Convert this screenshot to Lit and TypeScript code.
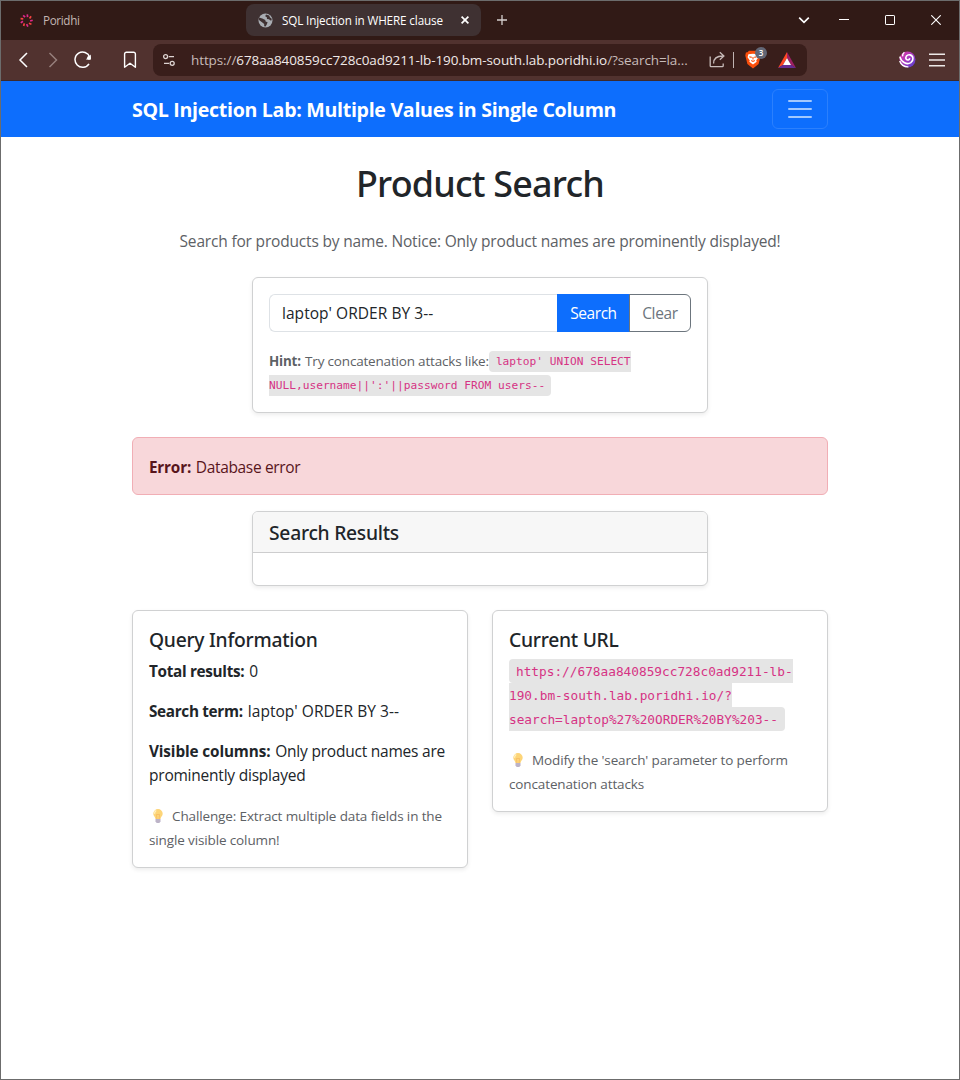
import { LitElement, html, css, svg } from "lit";
import { customElement, property } from "lit/decorators.js";

const reset = css`
  *, *::before, *::after { box-sizing: border-box; }
  :host { display: block; box-sizing: border-box; }
  svg { display: block; flex: none; }
`;

@customElement("browser-tabs")
export class BrowserTabs extends LitElement {
  static styles = [reset, css`
    .tabs { display: flex; align-items: center; height: 39px; padding: 0 18px 1px 18px; background: #311a16; font: 11.7px/16px "Open Sans", sans-serif; }
    .idle { display: flex; align-items: center; width: 227px; gap: 9px; color: #c3b6b3; letter-spacing: -0.36px; }
    .active { display: flex; align-items: center; width: 235px; height: 32px; padding: 0 9px 0 12px; border-radius: 8px; background: #3f3132; color: #fff; }
    .title { margin-left: 9px; width: 161px; letter-spacing: -0.13px; white-space: nowrap; }
    .close { margin-left: 15px; }
    .plus { margin-left: 15px; }
    .controls { display: flex; align-items: center; margin-left: auto; }
    .min { margin-left: 29px; }
    .max { margin-left: 35px; }
    .quit { margin-left: 35px; }
  `];
  render() {
    const spokes = Array.from({ length: 9 }, (_, i) => i * 40 + 10);
    return html`<div class="tabs">
      <div class="idle">
        <svg width="15" height="15" viewBox="-7.5 -7.5 15 15">
          ${spokes.map((a, i) => svg`<path d="M-.3 -6.2L.5 -3.6" transform="rotate(${a})" stroke=${i % 2 ? "#f5443f" : "#e0288a"} stroke-width="1.7" />`)}
        </svg>
        <span>Poridhi</span>
      </div>
      <div class="active">
        <svg width="15" height="15" viewBox="0 0 15 15">
          <circle cx="7.5" cy="7.5" r="7" fill="#a9adb3" />
          <path d="M1 4.6L4.3 5.6 7.3 6.9 7.6 8.6 9.6 9.2 9 11 7.6 13.4 6.2 13.2 6.2 11 4 9.2 1 7zM8 1.4L7.2 3.2 8.8 4.2 9 5.9 11 6.2 12.4 7.4 13.8 7.2 13.4 5.2 12 4.6 11.2 2.6z" fill="#3f3132" />
        </svg>
        <span class="title">SQL Injection in WHERE clause</span>
        <svg class="close" width="14" height="14" viewBox="0 0 14 14"><path d="M3.6 3.6l6.8 6.8m0-6.8l-6.8 6.8" stroke="#fff" stroke-width="1.7" /></svg>
      </div>
      <svg class="plus" width="12" height="12" viewBox="0 0 12 12"><path d="M6 1v10M1 6h10" stroke="#d5cfce" stroke-width="1.3" /></svg>
      <div class="controls">
        <svg width="12" height="12" viewBox="0 0 12 12"><path d="M1.2 3.7L6 8.3l4.8-4.6" fill="none" stroke="#fff" stroke-width="1.7" /></svg>
        <svg class="min" width="10" height="10" viewBox="0 0 10 10"><path d="M0 4.5h10" stroke="#fff" /></svg>
        <svg class="max" width="12" height="12" viewBox="0 0 12 12"><rect x="1.5" y="1.5" width="9" height="9" rx=".6" fill="none" stroke="#fff" /></svg>
        <svg class="quit" width="10" height="10" viewBox="0 0 10 10"><path d="M.3.3l9.4 9.4m0-9.4L.3 9.7" stroke="#fff" stroke-width="1.1" /></svg>
      </div>
    </div>`;
  }
}

@customElement("browser-toolbar")
export class BrowserToolbar extends LitElement {
  static styles = [reset, css`
    .bar { display: flex; align-items: center; height: 41px; padding: 0 14px 1px 17px; background: #51322f; border-bottom: 1px solid #3d2a2c; }
    .fwd { margin-left: 18px; }
    .reload { margin-left: 15px; }
    .mark { margin-left: 31px; }
    .address { display: flex; align-items: center; width: 654px; height: 32px; margin-left: 16px; padding: 0 10px 0 9px; border-radius: 8px; background: #391e1b; }
    .url { width: 498px; margin-left: 15px; color: #c7bbb9; font: 13.5px/20px "Open Sans", sans-serif; letter-spacing: -0.095px; white-space: nowrap; }
    .host { color: #f0e9e8; }
    .share { margin-left: 20px; }
    .rule { width: 1px; height: 16px; margin-left: 8px; background: #c0b4b2; }
    .shields { position: relative; margin-left: 11px; }
    .badge { position: absolute; left: 10px; top: -3px; width: 12px; height: 12px; border-radius: 50%; background: #636776; color: #fff; font: 600 8px/12px "Open Sans", sans-serif; text-align: center; }
    .bat { margin-left: 17px; }
    .swirl { margin-left: auto; }
    .menu { margin-left: 13px; }
  `];
  render() {
    return html`<div class="bar">
      <svg width="11" height="16" viewBox="0 0 11 16"><path d="M9 1L2 8l7 7" fill="none" stroke="#fff" stroke-width="1.5" /></svg>
      <svg class="fwd" width="12" height="16" viewBox="0 0 12 16"><path d="M2.5 1l7 7-7 7" fill="none" stroke="#967f7c" stroke-width="1.5" /></svg>
      <svg class="reload" width="18" height="18" viewBox="0 0 18 18"><path d="M15.8 6.2A7.6 7.6 0 1 0 15 12.8" fill="none" stroke="#fff" stroke-width="1.5" /><path d="M16.8 3.6v4.8h-5z" fill="#fff" /><circle cx="15" cy="6.9" r="1.9" fill="#fff" /></svg>
      <svg class="mark" width="14" height="18" viewBox="0 0 14 18"><path d="M1.6 3A1.8 1.8 0 0 1 3.4 1.2h7.2A1.8 1.8 0 0 1 12.4 3v13.2L7 12.2l-5.4 4z" fill="none" stroke="#fff" stroke-width="1.4" stroke-linejoin="round" /></svg>
      <div class="address">
        <svg width="14" height="14" viewBox="0 0 14 14"><g fill="none" stroke="#ddd3d1" stroke-width="1.3"><circle cx="3.6" cy="3.6" r="2" /><path d="M6.8 3.6H12M2 10.3h5.2" /><circle cx="10.2" cy="10.3" r="2" /></g></svg>
        <span class="url">https://<span class="host">678aa840859cc728c0ad9211-lb-190.bm-south.lab.poridhi.io</span>/?search=la...</span>
        <svg class="share" width="16" height="17" viewBox="0 0 16 17"><path d="M1.2 5.6v9.2q0 .9.9.9h11.2q.9 0 .9-.9v-2.2M4.6 12.4C4.6 7.6 7.4 5 13.8 5M10.8 1.2L14.9 5l-4.1 3.8" fill="none" stroke="#c7bbb9" stroke-width="1.3" /></svg>
        <span class="rule"></span>
        <span class="shields">
          <svg width="16" height="19" viewBox="0 0 16 19">
            <path d="M4 .8h8l1.5 1.4 1.6.2.6 3L13.6 14 8 18.4 2.4 14 .3 5.4l.6-3 1.6-.2z" fill="#fb4e0b" />
            <path d="M3.4 4.3L8 3.8l4.6.5.8 3-2.2 3.2.5 1.3L8 14.6l-3.7-2.8.5-1.3L2.6 7.3z" fill="#fff" />
            <path d="M4.3 6.8l2.4.6M11.7 6.8l-2.4.6M8 7v2.6M6.2 10.4L8 11.4l1.8-1" fill="none" stroke="#fb4e0b" stroke-width="1.1" />
          </svg>
          <span class="badge">3</span>
        </span>
        <svg class="bat" width="18" height="16" viewBox="0 0 18 16"><path d="M9 0L0 16l5-3 4-7z" fill="#ff4724" /><path d="M9 0l9 16-5-3-4-7z" fill="#9e1f63" /><path d="M0 16h18l-5-3.2H5z" fill="#662d91" /><path d="M9 6l4 7H5z" fill="#fff" /></svg>
      </div>
      <svg class="swirl" width="17" height="17" viewBox="0 0 17 17">
        <defs><linearGradient id="g" x1="0" y1="0" x2="1" y2="1"><stop offset="0" stop-color="#e0359d" /><stop offset=".5" stop-color="#a63bc0" /><stop offset="1" stop-color="#4b3fd0" /></linearGradient></defs>
        <circle cx="8.5" cy="8.5" r="8" fill="url(#g)" />
        <path d="M.8 5.6C2.4 11.6 8 14 11.800 11.600 15 9.400 14.600 4.800 11 3.900 8 3.300 5.900 6.200 7.300 8.200 8.400 9.600 10.800 9 10.600 7.200" fill="none" stroke="#fff" stroke-width="1.600" />
        <path d="M.7 10C2 13.800 5.400 16 9.400 15.900M5.400 1.200Q3.300 2.800 3.600 5.400" fill="none" stroke="#fff" stroke-width="1.400" />
      </svg>
      <svg class="menu" width="16" height="14" viewBox="0 0 16 14"><path d="M0 1.2h16M0 7h16M0 12.8h16" stroke="#eee9e8" stroke-width="1.5" /></svg>
    </div>`;
  }
}

@customElement("tip-text")
export class TipText extends LitElement {
  @property() text = "";
  static styles = [reset, css`
    .tip { color: #5d6165; font: 13.5px/24px "Open Sans", sans-serif; letter-spacing: -0.128px; padding-top: 1px; margin-bottom: -1px; }
    .bulb { display: inline-block; vertical-align: -2px; margin: 0 9px 0 4px; opacity: .75; }
  `];
  render() {
    return html`<div class="tip"><svg class="bulb" width="10" height="14" viewBox="0 0 10 14"><path d="M5 0a4.7 4.7 0 0 1 4.7 4.7c0 2.2-1.9 2.8-2.2 5.3h-5C2.2 7.5.3 6.9.3 4.7A4.7 4.7 0 0 1 5 0z" fill="#fdc74c" /><path d="M3.2 1.5Q1.5 2.5 1.6 4.8" fill="none" stroke="#fff0b8" stroke-width="1.2" /><path d="M3.8 10L3.5 5.5h3L6.2 10" fill="none" stroke="#f2a02c" stroke-width=".7" /><path d="M2.5 10h5v2.5L6.3 14H3.7l-1.2-1.5z" fill="#a69ab5" /></svg>${this.text}</div>`;
  }
}

@customElement("app-root")
export class AppRoot extends LitElement {
  static styles = [reset, css`
    :host { height: 1080px; border: 1px solid #6c6c6c; overflow: hidden; background: #fff; color: #212529; font: 15.5px/24px "Open Sans", sans-serif; letter-spacing: -0.178px; }
    h1, h5, p { margin: 0; }
    h1, h5 { font-family: "Noto Sans", sans-serif; font-weight: 500; }
    strong { font-weight: 700; font-size: 15.3px; letter-spacing: -0.32px; margin-right: 1px; }
    .nav { display: flex; align-items: center; justify-content: space-between; height: 56px; padding: 0 131px; background: #0d6efd; }
    .brand { color: #fff; font: 700 19.6px/30px "Open Sans", sans-serif; letter-spacing: -0.305px; padding-top: 2px; }
    .toggler { display: grid; place-items: center; width: 56px; height: 40px; border: 1px solid #2b80fd; border-radius: 6px; }
    .page { display: flex; flex-direction: column; padding: 24px 131px 0; }
    h1 { font-size: 35.9px; line-height: 43.7px; letter-spacing: -0.8px; text-align: center; padding-top: 1px; margin-bottom: 23px; }
    .lead { color: #5d6165; text-align: center; margin-bottom: 24px; }
    .card { border: 1px solid #d0d1d2; border-radius: 6px; background: #fff; box-shadow: 0 2px 4px rgba(0, 0, 0, .075); }
    .body { padding: 16px; }
    .narrow { width: 456px; align-self: center; }
    .group { display: flex; height: 38px; line-height: 36px; }
    .input { flex: 1; border: 1px solid #dee2e6; border-right: 0; border-radius: 6px 0 0 6px; padding-left: 12px; letter-spacing: 0.04px; }
    .go { width: 73px; border: 1px solid #0d6efd; background: #0d6efd; color: #fff; text-align: center; letter-spacing: -0.45px; }
    .clear { width: 62px; margin-left: -1px; border: 1px solid #6c757d; border-radius: 0 6px 6px 0; color: #6c757d; text-align: center; letter-spacing: -0.34px; }
    .hint { margin-top: 17px; color: #5d6165; font-size: 13.5px; letter-spacing: -0.185px; white-space: nowrap; height: 47px; }
    .hint strong { font-size: 13.4px; letter-spacing: -0.2px; }
    code { font-family: "DejaVu Sans Mono", monospace; line-height: 0; vertical-align: 1px; color: #d63384; background: #e5e5e5; border-radius: 4px; letter-spacing: 0; }
    .sql { font-size: 11.2px; padding: 4px 6px 4px 7px; }
    .href { font-size: 12.78px; padding: 4.5px 7px; }
    .alert { height: 58px; margin: 24px 0 16px; padding: 17px 16px; border: 1px solid #f1aeb5; border-radius: 6px; background: #f8d7da; color: #58151c; letter-spacing: -0.33px; }
    .alert strong { letter-spacing: -0.2px; }
    h5 { font-size: 19.3px; line-height: 24px; letter-spacing: -0.27px; padding-top: 1px; }
    .head { height: 41px; padding: 8px 16px; border-bottom: 1px solid #cdcdce; border-radius: 5px 5px 0 0; background: #f7f7f7; }
    .results { height: 75px; margin-bottom: 24px; }
    .cols { display: grid; grid-template-columns: 1fr 1fr; gap: 24px; align-items: start; }
    .cols h5 { margin-bottom: 7px; }
    .cols p { margin-bottom: 16px; white-space: nowrap; }
    .cols .term { letter-spacing: 0.04px; }
    .cols .visible { letter-spacing: -0.22px; }
    .visible strong { letter-spacing: -0.12px; }
  `];
  render() {
    return html`
      <browser-tabs></browser-tabs>
      <browser-toolbar></browser-toolbar>
      <div class="nav">
        <span class="brand">SQL Injection Lab: Multiple Values in Single Column</span>
        <span class="toggler"><svg width="30" height="30" viewBox="0 0 30 30"><path d="M4 7h22M4 15h22M4 23h22" stroke="#a2c8fe" stroke-width="2" stroke-linecap="round" /></svg></span>
      </div>
      <div class="page">
        <h1>Product Search</h1>
        <p class="lead">Search for products by name. Notice: Only product names are prominently displayed!</p>
        <div class="card body narrow">
          <div class="group"><span class="input">laptop' ORDER BY 3--</span><span class="go">Search</span><span class="clear">Clear</span></div>
          <div class="hint"><strong>Hint:</strong> Try concatenation attacks like:<code class="sql">laptop' UNION SELECT<br>NULL,username||':'||password FROM users--</code></div>
        </div>
        <div class="alert"><strong>Error:</strong> Database error</div>
        <div class="card narrow results"><div class="head"><h5>Search Results</h5></div></div>
        <div class="cols">
          <div class="card body">
            <h5>Query Information</h5>
            <p><strong>Total results:</strong> 0</p>
            <p class="term"><strong>Search term:</strong> laptop' ORDER BY 3--</p>
            <p class="visible"><strong>Visible columns:</strong> Only product names are<br>prominently displayed</p>
            <tip-text text="Challenge: Extract multiple data fields in the single visible column!"></tip-text>
          </div>
          <div class="card body">
            <h5>Current URL</h5>
            <p><code class="href">https://678aa840859cc728c0ad9211-lb-<br>190.bm-south.lab.poridhi.io/?<br>search=laptop%27%20ORDER%20BY%203--</code></p>
            <tip-text text="Modify the 'search' parameter to perform concatenation attacks"></tip-text>
          </div>
        </div>
      </div>`;
  }
}
